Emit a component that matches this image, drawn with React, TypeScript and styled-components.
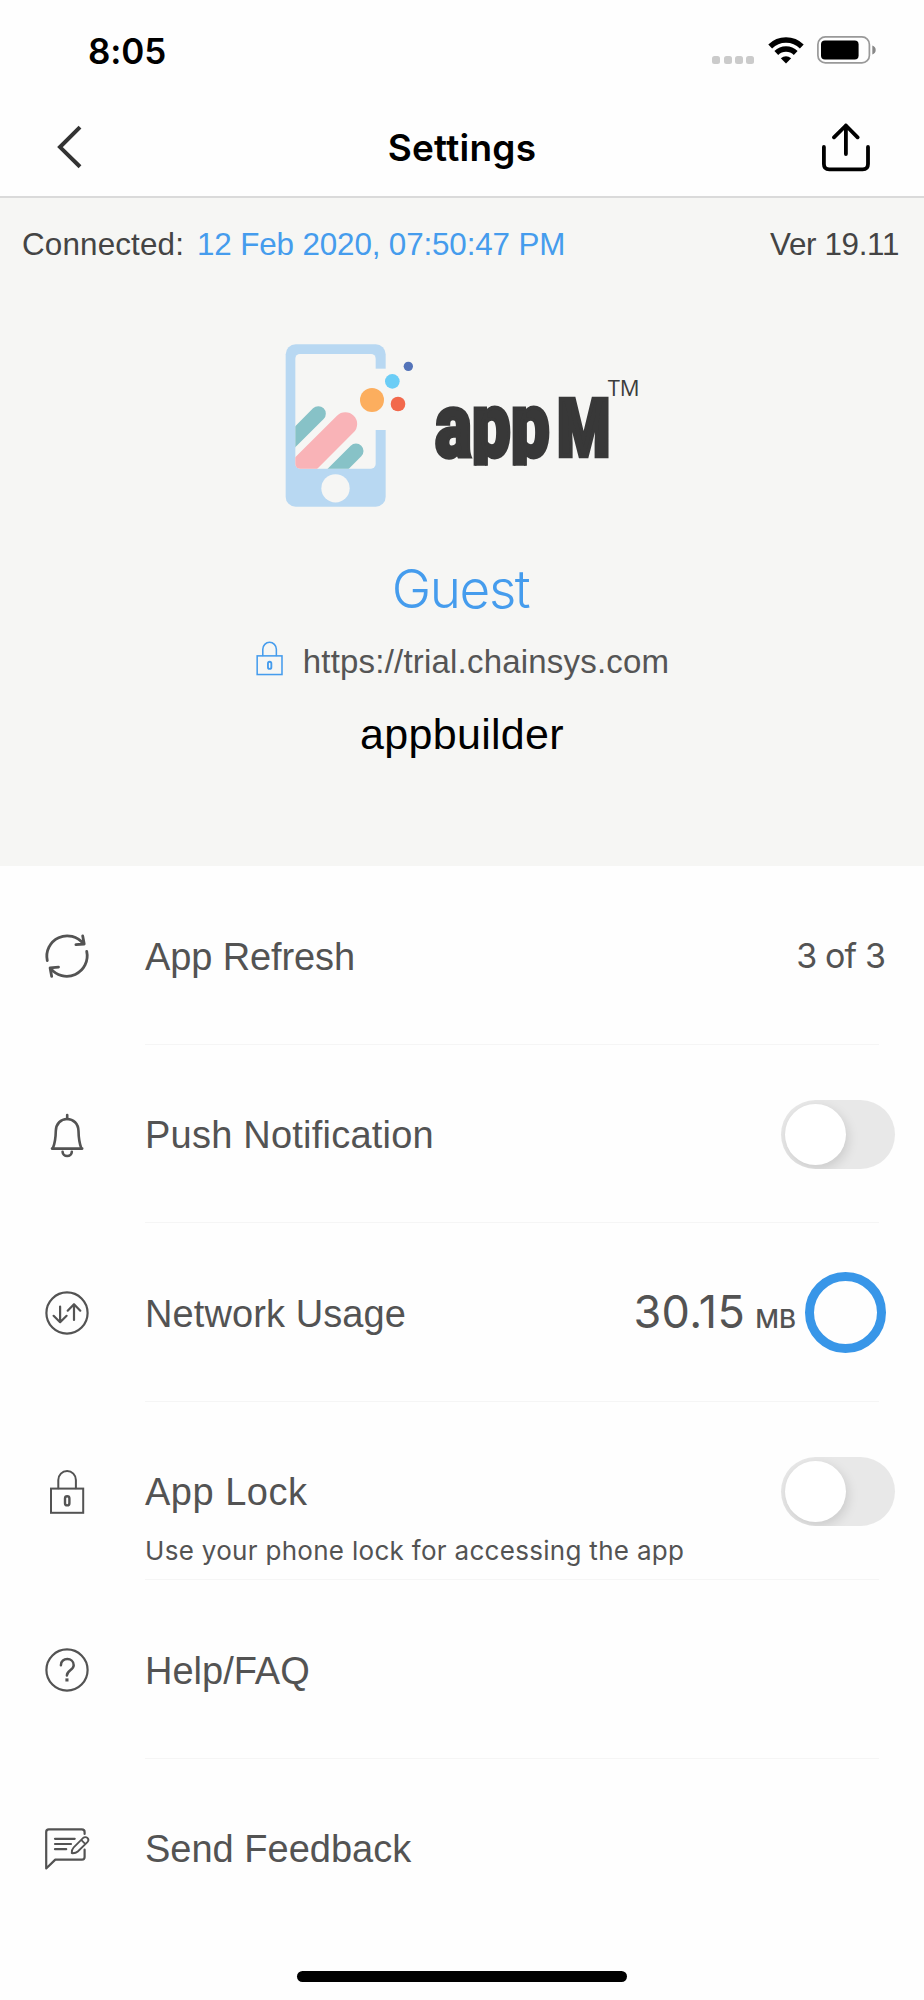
import React from "react";
import styled, { createGlobalStyle } from "styled-components";

const BLUE = "#459ced";
const TEXT = "#535353";

const GlobalStyle = createGlobalStyle`
  * { box-sizing: border-box; }
  body {
    margin: 0;
    background: #fefefe;
    font-family: "Liberation Sans", Arial, sans-serif;
  }
  svg { display: block; flex: none; }
`;

const Screen = styled.main`
  width: 924px;
  height: 2000px;
  display: flex;
  flex-direction: column;
  overflow: hidden;
  background: #fefefe;
  color: ${TEXT};
`;

const StatusBar = styled.div`
  height: 100px;
  flex: none;
  display: flex;
  align-items: center;
  justify-content: space-between;
  padding: 0 47px 0 88px;
`;

const Time = styled.span`
  margin-top: 2px;
  font: 600 35px/40px Inter, sans-serif;
  letter-spacing: -0.1px;
  color: #000;
`;

const StatusIcons = styled.div`
  display: flex;
  align-items: center;
`;

const SignalDots = styled.div`
  display: flex;
  gap: 3.2px;
  margin: 19px 14px 0 0;
`;

const SignalDot = styled.i`
  width: 8px;
  height: 8px;
  border-radius: 2.5px;
  background: #cbcbcb;
`;

const BatteryWrap = styled.div`
  margin-left: 13px;
`;

const NavBar = styled.header`
  height: 98px;
  flex: none;
  display: flex;
  align-items: center;
  justify-content: space-between;
  border-bottom: 2px solid #dadada;
`;

const NavButton = styled.button<{ $side: "left" | "right" }>`
  width: 130px;
  height: 60px;
  display: flex;
  align-items: center;
  justify-content: ${(p) => (p.$side === "left" ? "flex-start" : "flex-end")};
  padding: ${(p) => (p.$side === "left" ? "0 0 2px 56px" : "0 54px 1px 0")};
  border: 0;
  background: none;
`;

const Title = styled.h1`
  margin: 0;
  font: 600 37px/44px Inter, sans-serif;
  letter-spacing: 0.25px;
  color: #000;
`;

const Hero = styled.section`
  height: 668px;
  flex: none;
  display: flex;
  flex-direction: column;
  align-items: center;
  background: #f6f6f4;
`;

const Connection = styled.div`
  width: 100%;
  display: flex;
  margin-bottom: -1px;
  padding: 27px 25px 0 22px;
  font-size: 31.4px;
  line-height: 40px;
  color: #444;
`;

const ConnectedLabel = styled.span`
  letter-spacing: 0.15px;
`;

const ConnectedAt = styled.span`
  margin-left: 13px;
  letter-spacing: -0.15px;
  color: ${BLUE};
`;

const Version = styled.span`
  margin-left: auto;
  letter-spacing: -0.35px;
`;

const LogoWrap = styled.div`
  margin: 66px 0 39px 16px;
`;

const UserName = styled.div`
  margin-right: 3px;
  font: 300 53px/60px Inter, sans-serif;
  letter-spacing: -1.4px;
  color: ${BLUE};
`;

const ServerLine = styled.div`
  display: flex;
  align-items: center;
  gap: 15px;
  height: 40px;
  margin: 23px 4px 27px 0;
  font-size: 33px;
  line-height: 40px;
  letter-spacing: 0.2px;
  color: #555;
`;

const ServerIcon = styled.span`
  margin-bottom: 7px;
  color: ${BLUE};
`;

const Workspace = styled.div`
  font-size: 43px;
  line-height: 50px;
  letter-spacing: 0.3px;
  color: #000;
`;

const List = styled.section`
  flex: none;
  height: 1071px;
`;

const Row = styled.div`
  height: 178.5px;
  display: flex;
  flex-direction: column;
  padding-top: 50px;
`;

const RowMain = styled.div`
  height: 80px;
  display: flex;
  align-items: center;
  padding-left: 43px;
`;

const RowLabel = styled.span<{ $tracking?: number }>`
  flex: 1;
  margin: 1px 0 0 54px;
  font-size: 38px;
  line-height: 48px;
  letter-spacing: ${(p) => p.$tracking ?? 0}px;
`;

const RowHint = styled.div`
  margin: 1px 0 0 145px;
  font: 400 26px/36px Inter, sans-serif;
  letter-spacing: 0.3px;
`;

const Divider = styled.div`
  height: 1px;
  margin: auto 45px 0 145px;
  background: #f5f5f5;
`;

const Count = styled.span`
  margin-right: 39px;
  font: 400 34px/40px Inter, sans-serif;
  letter-spacing: -0.9px;
`;

const Usage = styled.div`
  display: flex;
  align-items: baseline;
  gap: 10px;
  margin: 4px 9px 0 0;
`;

const UsageValue = styled.span`
  font: 400 45px/50px Inter, sans-serif;
  letter-spacing: 0.4px;
`;

const UsageUnit = styled.span`
  font: 500 26px/50px Inter, sans-serif;
`;

const UsageRing = styled.div`
  width: 81px;
  height: 81px;
  margin: 0 38px 2px 0;
  border: 9px solid #3896e8;
  border-radius: 50%;
`;

const Switch = styled.button`
  width: 114px;
  height: 69px;
  margin-right: 29px;
  padding: 4px;
  border: 0;
  border-radius: 35px;
  background: #e8e8e8;
  overflow: hidden;
`;

const Knob = styled.span`
  display: block;
  width: 61px;
  height: 61px;
  border-radius: 50%;
  background: #fff;
  box-shadow: 2px 4px 12px rgba(0, 0, 0, 0.13);
`;

const HomeIndicator = styled.div`
  width: 330px;
  height: 11px;
  flex: none;
  margin: 34px 0 0 297px;
  border-radius: 6px;
  background: #000;
`;

const Line = styled.svg<{ $join?: string }>`
  fill: none;
  stroke: currentColor;
  stroke-linecap: round;
  stroke-linejoin: ${(p) => p.$join ?? "round"};
`;

const RefreshIcon = () => (
  <Line width="48" height="48" viewBox="0 0 48 48" strokeWidth="2.8">
    <path d="M4.3 28.6A20.4 20.4 0 0 1 40.4 11.8M39.7 4l1.5 8-8.3.6" />
    <path d="M43.7 19.4A20.4 20.4 0 0 1 7.4 36M8.7 44.4L7.1 35.9l8.4-.7" />
  </Line>
);

const BellIcon = () => (
  <Line width="48" height="48" viewBox="0 0 48 48" strokeWidth="2.6">
    <path d="M24.2 4v4M9 37.6h30.2" />
    <path d="M9.8 37.6C12 32 12.7 27 12.8 20C13 12.6 17.8 8 24.1 8s11.2 4.6 11.4 12c.1 7 .8 12 2.9 17.6" />
    <path d="M19.6 40.8a4.6 4.2 0 0 0 9.2 0" />
  </Line>
);

const NetworkIcon = () => (
  <Line width="48" height="48" viewBox="0 0 48 48" strokeWidth="2.2">
    <circle cx="24" cy="24" r="20.6" />
    <path d="M17.1 17.5v15.7M10.6 26.8l6.5 6.5 6.5-6.5M31 31V15.3M24.7 21.7l6.3-6.5 6.3 6.5" />
  </Line>
);

const LockIcon = ({ size = 48 }: { size?: number }) => (
  <Line width={size} height={size} viewBox="0 0 48 48" strokeWidth="2" $join="miter">
    <rect x="8" y="20.6" width="32.2" height="24.2" />
    <path d="M15.3 20.2V12a8.8 9 0 0 1 17.6 0v8.2" />
    <rect x="22" y="28.2" width="4.4" height="9.2" rx="2.2" strokeWidth="2.4" />
  </Line>
);

const HelpIcon = () => (
  <Line width="48" height="48" viewBox="0 0 48 48" strokeWidth="2.2">
    <circle cx="24" cy="24" r="20.6" />
    <path strokeWidth="2.5" d="M17.9 19.2C17.9 10.9 30.7 11 30.7 19.2C30.7 24 23.9 24.6 23.9 29.4" />
    <rect x="22.4" y="32.4" width="3.1" height="3.1" fill="currentColor" stroke="none" />
  </Line>
);

const FeedbackIcon = () => (
  <Line width="48" height="48" viewBox="0 0 48 48" strokeWidth="2.2">
    <path d="M41.6 9V7q0-2.6-2.8-2.6H5.8Q3.2 4.4 3.2 7V43.5L12.3 34.6H39Q41.6 34.6 41.6 32V24.6" />
    <path d="M12 13.8H31.7M12 19H28M12 24.2H23.2" />
    <path strokeWidth="1.8" d="M28.7 28.2C28.5 25.6 29.2 23.9 30.7 22.3L40.2 12.9a2.9 2.9 0 0 1 4.2 4.2L34.8 26.5C33.2 28 31.3 28.4 28.7 28.2ZM38.2 14.9l4.2 4.2" />
  </Line>
);

const BackIcon = () => (
  <svg width="26" height="44" viewBox="0 0 26 44" fill="none" stroke="#333" strokeWidth="4">
    <path d="M24 2.2L4 22.1 24 41.700" />
  </svg>
);

const ShareIcon = () => (
  <svg width="48" height="49" viewBox="0 0 48 49" fill="none" stroke="#000" strokeWidth="3.8" strokeLinecap="round" strokeLinejoin="round">
    <path d="M1.9 24V41q0 5.400 5.400 5.400H40.600q5.400 0 5.400-5.400V24" />
    <path d="M23.900 31V2.500M12 14.300L23.900 2.500 35.600 14.300" />
  </svg>
);

const WifiIcon = () => (
  <svg width="36" height="27" viewBox="0 0 36 27" fill="none" stroke="#000" strokeWidth="5.4">
    <path d="M2.2 9.5A22.5 22.5 0 0 1 33.8 9.5" />
    <path d="M8.3 16A13.8 13.8 0 0 1 27.7 16" />
    <path d="M12.8 21.3Q18 17.2 23.2 21.3L18 26.5Z" fill="#000" stroke="none" />
  </svg>
);

const BatteryIcon = () => (
  <svg width="60" height="28" viewBox="0 0 60 28">
    <rect x="0.9" y="0.9" width="51.5" height="26" rx="7.5" fill="none" stroke="#999" strokeWidth="1.7" />
    <rect x="4" y="4.6" width="37.6" height="19" rx="4" fill="#000" />
    <path d="M55.3 9.5Q58.7 10.7 58.7 14T55.3 18.5Z" fill="#888" />
  </svg>
);

const Logo = () => (
  <svg width="400" height="190" viewBox="0 0 1200 570">
    <defs>
      <clipPath id="display">
        <rect x="76" y="72" width="241" height="344" rx="14" />
      </clipPath>
      <clipPath id="wordmark">
        <rect x="480" y="190" width="372" height="217" />
      </clipPath>
    </defs>
    <rect x="47" y="43" width="300" height="487" rx="30" fill="#b8d8f2" />
    <rect x="76" y="72" width="241" height="344" rx="14" fill="#f6f6f4" />
    <rect x="300" y="116" width="50" height="184" fill="#f6f6f4" />
    <circle cx="196.5" cy="475" r="42.5" fill="#f6f6f4" />
    <g clipPath="url(#display)" strokeLinecap="round">
      <path d="M145 251L-5 401" stroke="#87c2c7" strokeWidth="45" />
      <path d="M226 282L26 482" stroke="#f9b3b7" strokeWidth="71" />
      <path d="M258 363L108 513" stroke="#87c2c7" strokeWidth="45" />
    </g>
    <circle cx="306" cy="210" r="36" fill="#fcae5e" />
    <circle cx="367" cy="154" r="22" fill="#6bcdf6" />
    <circle cx="384" cy="222" r="22" fill="#f2694c" />
    <circle cx="415" cy="109" r="14" fill="#5474b9" />
    <g fontFamily="Roboto, sans-serif" fontWeight="900" fill="#383838" stroke="#383838">
      <g clipPath="url(#wordmark)">
        <text transform="translate(495 380) scale(0.77 1)" fontSize="270" strokeWidth="11">app</text>
      </g>
      <text transform="translate(862 378) scale(0.76 1)" fontSize="238" strokeWidth="14">M</text>
    </g>
    <text x="1013" y="198" fontFamily="Open Sans, sans-serif" fontSize="67" textLength="96" lengthAdjust="spacingAndGlyphs" fill="#3c3c3c">TM</text>
  </svg>
);

interface SettingRowProps {
  icon: React.ReactNode;
  label: string;
  tracking?: number;
  hint?: string;
  last?: boolean;
  children?: React.ReactNode;
}

const SettingRow = ({ icon, label, tracking, hint, last, children }: SettingRowProps) => (
  <Row>
    <RowMain>
      {icon}
      <RowLabel $tracking={tracking}>{label}</RowLabel>
      {children}
    </RowMain>
    {hint && <RowHint>{hint}</RowHint>}
    {!last && <Divider />}
  </Row>
);

const Toggle = ({ label }: { label: string }) => (
  <Switch role="switch" aria-checked={false} aria-label={label}>
    <Knob />
  </Switch>
);

export default function App() {
  return (
    <>
      <GlobalStyle />
      <Screen>
        <StatusBar>
          <Time>8:05</Time>
          <StatusIcons>
            <SignalDots>
              <SignalDot />
              <SignalDot />
              <SignalDot />
              <SignalDot />
            </SignalDots>
            <WifiIcon />
            <BatteryWrap>
              <BatteryIcon />
            </BatteryWrap>
          </StatusIcons>
        </StatusBar>
        <NavBar>
          <NavButton $side="left" aria-label="Back">
            <BackIcon />
          </NavButton>
          <Title>Settings</Title>
          <NavButton $side="right" aria-label="Share">
            <ShareIcon />
          </NavButton>
        </NavBar>
        <Hero>
          <Connection>
            <ConnectedLabel>Connected:</ConnectedLabel>
            <ConnectedAt>12 Feb 2020, 07:50:47 PM</ConnectedAt>
            <Version>Ver 19.11</Version>
          </Connection>
          <LogoWrap>
            <Logo />
          </LogoWrap>
          <UserName>Guest</UserName>
          <ServerLine>
            <ServerIcon>
              <LockIcon size={37} />
            </ServerIcon>
            https://trial.chainsys.com
          </ServerLine>
          <Workspace>appbuilder</Workspace>
        </Hero>
        <List>
          <SettingRow icon={<RefreshIcon />} label="App Refresh" tracking={-0.12}>
            <Count>3 of 3</Count>
          </SettingRow>
          <SettingRow icon={<BellIcon />} label="Push Notification" tracking={0.22}>
            <Toggle label="Push Notification" />
          </SettingRow>
          <SettingRow icon={<NetworkIcon />} label="Network Usage" tracking={0.1}>
            <Usage>
              <UsageValue>30.15</UsageValue>
              <UsageUnit>MB</UsageUnit>
            </Usage>
            <UsageRing />
          </SettingRow>
          <SettingRow
            icon={<LockIcon />}
            label="App Lock"
            tracking={0.5}
            hint="Use your phone lock for accessing the app"
          >
            <Toggle label="App Lock" />
          </SettingRow>
          <SettingRow icon={<HelpIcon />} label="Help/FAQ" />
          <SettingRow icon={<FeedbackIcon />} label="Send Feedback" last />
        </List>
        <HomeIndicator />
      </Screen>
    </>
  );
}
